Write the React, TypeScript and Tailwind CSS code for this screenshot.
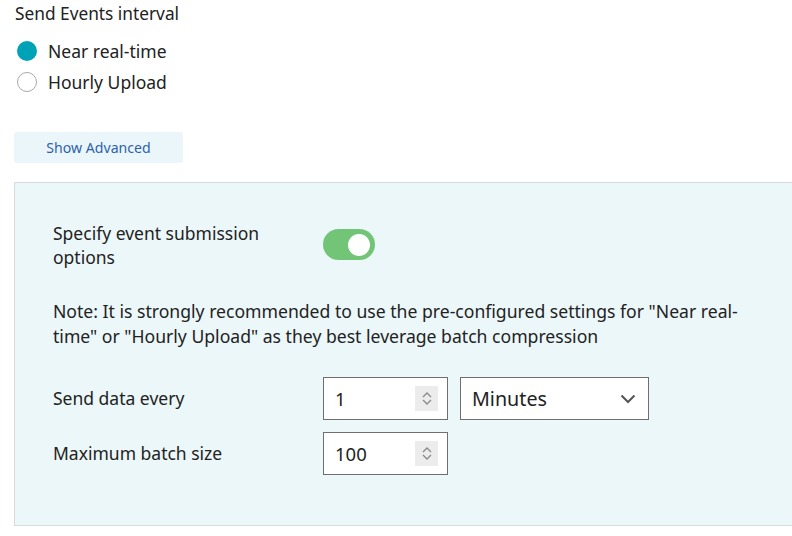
import React from "react";

function Spinner() {
  return (
    <div className="flex h-[25px] w-[23px] flex-col items-center justify-center gap-[1px] bg-[#ececec]">
      <svg width="10" height="6" viewBox="0 0 10 6" fill="none">
        <path d="M1 5l4-4 4 4" stroke="#8a8a8a" strokeWidth="1.3" />
      </svg>
      <svg width="10" height="6" viewBox="0 0 10 6" fill="none">
        <path d="M1 1l4 4 4-4" stroke="#8a8a8a" strokeWidth="1.3" />
      </svg>
    </div>
  );
}

function NumberBox({ value }: { value: string }) {
  return (
    <div className="flex h-[43px] w-[125px] items-center justify-between border border-[#6f6f6f] bg-white pl-[11px] pr-[9px] text-[18.5px] text-[#222]">
      <span>{value}</span>
      <Spinner />
    </div>
  );
}

export default function App() {
  return (
    <div className="h-[536px] w-[792px] overflow-hidden bg-white font-['Noto_Sans',sans-serif] text-[#222]">
      <div className="pl-[15px] pt-[2px] text-[17.3px] leading-[24px]">Send Events interval</div>

      <div className="mt-[13px] flex flex-col gap-[7px] pl-[17px]">
        <label className="flex items-center gap-[11px] text-[17.5px] leading-[24px]">
          <span className="h-[20px] w-[20px] rounded-full bg-[#00a3b6]" />
          Near real-time
        </label>
        <label className="flex items-center gap-[11px] text-[17.5px] leading-[24px]">
          <span className="h-[20px] w-[20px] rounded-full border border-[#a9a9a9] bg-white" />
          Hourly Upload
        </label>
      </div>

      <button className="ml-[14px] mt-[38px] flex h-[31px] w-[169px] items-center justify-center rounded-[3px] bg-[#eaf6f9] pt-[1px] text-[14.1px] text-[#2d62ae]">
        Show Advanced
      </button>

      <div className="ml-[14px] mt-[19px] h-[344px] w-[800px] border border-[#d6dcdc] bg-[#ecf7f9] pl-[38px] pt-[38px]">
        <div className="flex items-start">
          <div className="w-[270px] text-[17.5px] leading-[24px]">
            Specify event submission
            <br />
            options
          </div>
          <div className="mt-[8px] flex h-[31px] w-[52px] items-center justify-end rounded-full bg-[#72c576] pr-[5px]">
            <span className="h-[22px] w-[22px] rounded-full bg-white" />
          </div>
        </div>

        <p className="mt-[30px] w-[720px] text-[17.6px] leading-[25px]">
          Note: It is strongly recommended to use the pre-configured settings for "Near real-
          <br />
          time" or "Hourly Upload" as they best leverage batch compression
        </p>

        <div className="mt-[28px] flex items-center">
          <div className="w-[270px] text-[17.5px]">Send data every</div>
          <NumberBox value="1" />
          <div className="ml-[12px] flex h-[43px] w-[189px] items-center justify-between border border-[#6f6f6f] bg-white pl-[11px] pr-[12px] text-[19.7px]">
            <span>Minutes</span>
            <svg width="16" height="10" viewBox="0 0 16 10" fill="none">
              <path d="M1.5 1.5l6.5 6.5 6.5-6.5" stroke="#555" strokeWidth="2" />
            </svg>
          </div>
        </div>

        <div className="mt-[12px] flex items-center">
          <div className="w-[270px] text-[17.5px]">Maximum batch size</div>
          <NumberBox value="100" />
        </div>
      </div>
    </div>
  );
}
